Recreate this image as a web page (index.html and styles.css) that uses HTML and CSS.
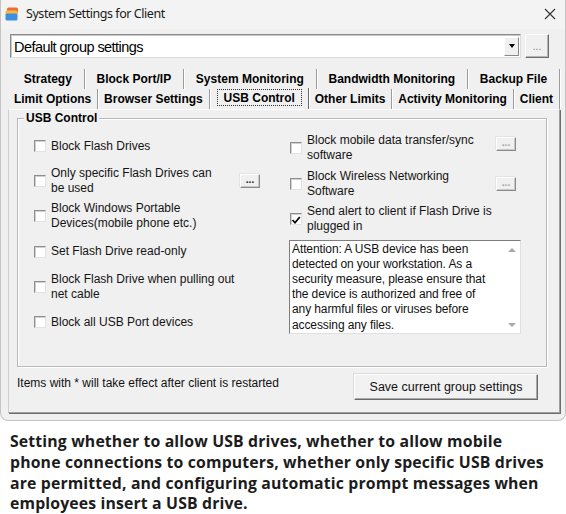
FILE: index.html
```html
<!DOCTYPE html>
<html>
<head>
<meta charset="utf-8">
<title>System Settings for Client</title>
<link rel="stylesheet" href="styles.css">
</head>
<body>
<div class="window">
  <div class="titlebar">
    <svg class="app-icon" width="14" height="14" viewBox="0 0 14 14">
      <rect x="2" y="0.5" width="11" height="6" rx="1.5" fill="#ef6a3a"/>
      <rect x="0.5" y="3.5" width="12" height="5" rx="1.5" fill="#f4b942"/>
      <rect x="0.5" y="6.5" width="12" height="7" rx="1.5" fill="#3d8fe0"/>
    </svg>
    <span class="title">System Settings for Client</span>
    <svg class="close" width="12" height="12" viewBox="0 0 12 12">
      <path d="M1 1 L11 11 M11 1 L1 11" stroke="#333" stroke-width="1.1" fill="none"/>
    </svg>
  </div>

  <div class="combo-row">
    <div class="combo">
      <span class="combo-text">Default group settings</span>
      <span class="combo-btn"><span class="tri-down"></span></span>
    </div>
    <div class="dots-btn">...</div>
  </div>

  <div class="tabs">
    <div class="tab-row back">
      <div class="tab">Strategy</div>
      <div class="tab">Block Port/IP</div>
      <div class="tab">System Monitoring</div>
      <div class="tab">Bandwidth Monitoring</div>
      <div class="tab">Backup File</div>
    </div>
    <div class="tab-row front">
      <div class="tab">Limit Options</div>
      <div class="tab">Browser Settings</div>
      <div class="tab selected"><span class="focus">USB Control</span></div>
      <div class="tab">Other Limits</div>
      <div class="tab">Activity Monitoring</div>
      <div class="tab">Client</div>
    </div>
  </div>

  <div class="panel">
    <div class="group">
      <div class="group-title">USB Control</div>
      <div class="cols">
        <div class="col col-left">
          <div class="item"><span class="cb"></span><span class="lbl">Block Flash Drives</span></div>
          <div class="item"><span class="cb"></span><span class="lbl">Only specific Flash Drives can<br>be used</span><span class="mini-btn dark mini-left">...</span></div>
          <div class="item"><span class="cb"></span><span class="lbl">Block Windows Portable<br>Devices(mobile phone etc.)</span></div>
          <div class="item"><span class="cb"></span><span class="lbl">Set Flash Drive read-only</span></div>
          <div class="item"><span class="cb"></span><span class="lbl">Block Flash Drive when pulling out<br>net cable</span></div>
          <div class="item"><span class="cb"></span><span class="lbl">Block all USB Port devices</span></div>
        </div>
        <div class="col col-right">
          <div class="item ritem"><span class="cb"></span><span class="lbl">Block mobile data transfer/sync<br>software</span><span class="mini-btn mini-right up">...</span></div>
          <div class="item ritem"><span class="cb"></span><span class="lbl">Block Wireless Networking<br>Software</span><span class="mini-btn mini-right">...</span></div>
          <div class="item ritem"><span class="cb checked"><svg width="10" height="10" viewBox="0 0 10 10"><path d="M1.5 5 L4 7.8 L8.8 2" stroke="#000" stroke-width="1.7" fill="none"/></svg></span><span class="lbl">Send alert to client if Flash Drive is<br>plugged in</span></div>
          <div class="memo">
            <div class="memo-text">Attention: A USB device has been<br>detected on your workstation. As a<br>security measure, please ensure that<br>the device is authorized and free of<br>any harmful files or viruses before<br>accessing any files.</div>
            <div class="memo-scroll"><span class="tri-up"></span><span class="tri-dn"></span></div>
          </div>
        </div>
      </div>
    </div>
    <div class="footer">
      <span class="note">Items with * will take effect after client is restarted</span>
      <div class="save-btn">Save current group settings</div>
    </div>
  </div>
</div>

<p class="caption">Setting whether to allow USB drives, whether to allow mobile<br>phone connections to computers, whether only specific USB drives<br>are permitted, and configuring automatic prompt messages when<br>employees insert a USB drive.</p>
</body>
</html>
```

FILE: styles.css
```css
html, body {
  margin: 0;
  padding: 0;
  background: #ffffff;
}
body {
  width: 566px;
  font-family: "Liberation Sans", Arial, sans-serif;
  font-size: 12px;
  color: #111;
}

.window {
  box-sizing: border-box;
  width: 566px;
  height: 421px;
  background: #f0f0f0;
  border: 1px solid #c4c4c4;
  border-top: none;
  border-radius: 0 0 8px 8px;
  overflow: hidden;
}

/* title bar */
.titlebar {
  height: 29px;
  display: flex;
  align-items: center;
  padding-left: 4px;
  background: #f3f3f3;
}
.app-icon {
  flex: none;
  margin-top: -2px;
}
.title {
  margin-left: 7px;
  font-family: "Noto Sans", "Open Sans", sans-serif;
  font-size: 12.5px;
  letter-spacing: -0.45px;
  color: #1a1a1a;
  margin-top: -2px;
}
.close {
  margin-left: auto;
  margin-right: 9px;
  margin-top: -2px;
}

/* combo */
.combo-row {
  display: flex;
  height: 24px;
  margin-top: 5px;
  padding-left: 9px;
}
.combo {
  box-sizing: border-box;
  width: 511px;
  height: 24px;
  display: flex;
  align-items: center;
  background: #fff;
  border: 1px solid;
  border-color: #8c8c8c #dcdcdc #dcdcdc #8c8c8c;
  box-shadow: inset 1px 1px 0 #c8c8c8;
}
.combo-text {
  padding-left: 3px;
  font-size: 14.5px;
  letter-spacing: -0.55px;
  color: #000;
  margin-top: 1px;
}
.combo-btn {
  box-sizing: border-box;
  width: 15px;
  height: 19px;
  margin: 0 1px 0 auto;
  background: #f0f0f0;
  border: 1px solid;
  border-color: #ffffff #8a8a8a #8a8a8a #ffffff;
  display: flex;
  align-items: center;
  justify-content: center;
}
.tri-down {
  width: 0;
  height: 0;
  border-left: 3.5px solid transparent;
  border-right: 3.5px solid transparent;
  border-top: 4px solid #000;
}
.dots-btn {
  box-sizing: border-box;
  width: 24px;
  height: 24px;
  margin-left: 4px;
  background: #f0f0f0;
  border: 1px solid;
  border-color: #ffffff #6e6e6e #6e6e6e #ffffff;
  box-shadow: inset -1px -1px 0 #b4b4b4;
  font-size: 10px;
  color: #777;
  text-align: center;
  line-height: 24px;
}

/* tabs */
.tabs {
  margin-top: 11px;
}
.tab-row {
  display: flex;
  height: 20px;
}
.tab-row.back {
  margin-left: 11px;
  width: 548px;
}
.tab-row.front {
  margin-left: 7px;
  width: 552px;
}
.tab {
  flex: 1 1 auto;
  text-align: center;
  font-weight: bold;
  font-size: 12px;
  line-height: 20px;
  color: #000;
  white-space: nowrap;
  border-right: 1px solid #9c9c9c;
  box-shadow: 1px 0 0 #ffffff;
}
.tab.selected {
  position: relative;
  z-index: 1;
  height: 21px;
  margin-top: -1px;
  border-left: 1px solid #ffffff;
  border-right: 1px solid #6a6a6a;
  background: #f0f0f0;
  line-height: 18px;
}
.focus {
  display: inline-block;
  margin-top: 1px;
  padding: 1px 6px 0 6px;
  line-height: 14px;
  border: 1px dotted #333;
}

/* panel */
.panel {
  box-sizing: border-box;
  margin-left: 7px;
  width: 552px;
  height: 304px;
  border-top: 1px solid #ffffff;
  border-left: 1px solid #d0d0d0;
  border-right: 1px solid #a0a0a0;
  border-bottom: 1px solid #a0a0a0;
  box-shadow: 1px 1px 0 #6e6e6e;
  padding-left: 8px;
}
.group {
  box-sizing: border-box;
  width: 530px;
  height: 249px;
  margin-top: 8px;
  border: 1px solid #b9b9b9;
  box-shadow: inset 1px 1px 0 #ffffff, 1px 1px 0 #ffffff;
  padding-left: 16px;
}
.group-title {
  display: block;
  width: max-content;
  margin: -8px 0 0 -10px;
  padding: 0 2px;
  background: #f0f0f0;
  font-weight: bold;
  font-size: 12px;
  line-height: 14px;
  color: #000;
}
.cols {
  display: grid;
  grid-template-columns: 256px 231px;
  margin-top: 3.5px;
}
.col {
  display: flex;
  flex-direction: column;
}
.col-right {
  padding-top: 2px;
}
.item {
  display: flex;
  align-items: center;
  height: 35.2px;
}
.ritem {
  height: 35.5px;
}
.cb {
  box-sizing: border-box;
  flex: none;
  width: 12px;
  height: 12px;
  background: #fff;
  border: 1px solid;
  border-color: #8e8e8e #e2e2e2 #e2e2e2 #8e8e8e;
  box-shadow: inset 1px 1px 0 #d0d0d0;
  display: flex;
  align-items: center;
  justify-content: center;
}
.cb svg {
  margin-top: 1px;
}
.lbl {
  margin-left: 5px;
  line-height: 15px;
  white-space: nowrap;
  color: #141414;
}
.mini-btn {
  box-sizing: border-box;
  flex: none;
  width: 20px;
  height: 14px;
  margin-left: auto;
  background: #f0f0f0;
  border: 1px solid;
  border-color: #ffffff #8a8a8a #8a8a8a #ffffff;
  box-shadow: inset -1px -1px 0 #c8c8c8, -1px -1px 0 #e4e4e4;
  font-size: 10px;
  font-weight: bold;
  line-height: 9px;
  text-align: center;
  color: #a0a0a0;
}
.mini-btn.dark {
  color: #1a1a1a;
}
.mini-left {
  margin-right: 30px;
}
.mini-right {
  margin-right: 5px;
}
.mini-btn.up {
  margin-bottom: 8px;
}

/* memo */
.memo {
  box-sizing: border-box;
  display: flex;
  width: 232px;
  height: 94px;
  margin: 2.5px 0 0 -1px;
  background: #fff;
  border: 1px solid;
  border-color: #7e7e7e #e0e0e0 #e0e0e0 #7e7e7e;
}
.memo-text {
  flex: 1 1 auto;
  padding: 1px 0 0 2px;
  line-height: 15.2px;
  font-size: 12px;
  letter-spacing: -0.1px;
  white-space: nowrap;
  color: #111;
}
.memo-scroll {
  flex: none;
  width: 17px;
  display: flex;
  flex-direction: column;
  justify-content: space-between;
  align-items: center;
  padding: 7px 0 6px;
}
.tri-up {
  width: 0;
  height: 0;
  border-left: 4px solid transparent;
  border-right: 4px solid transparent;
  border-bottom: 4px solid #a8a8a8;
}
.tri-dn {
  width: 0;
  height: 0;
  border-left: 4px solid transparent;
  border-right: 4px solid transparent;
  border-top: 4px solid #a8a8a8;
}

/* footer */
.footer {
  display: flex;
  justify-content: space-between;
  align-items: flex-start;
  margin-top: 7px;
  padding-right: 21px;
}
.note {
  margin-top: 2px;
  line-height: 14px;
  color: #111;
}
.save-btn {
  box-sizing: border-box;
  width: 184px;
  height: 26px;
  background: #f2f2f2;
  border: 1px solid;
  border-color: #ffffff #6a6a6a #6a6a6a #ffffff;
  box-shadow: inset -1px -1px 0 #a8a8a8, -1px -1px 0 #dcdcdc;
  text-align: center;
  line-height: 24px;
  font-size: 12.5px;
  color: #111;
}

/* caption */
.caption {
  margin: 10px 0 0 10px;
  font-family: "Open Sans", "Noto Sans", sans-serif;
  font-weight: 700;
  font-size: 15.8px;
  line-height: 20.8px;
  letter-spacing: 0.15px;
  color: #1c1c1c;
  white-space: nowrap;
}
```
